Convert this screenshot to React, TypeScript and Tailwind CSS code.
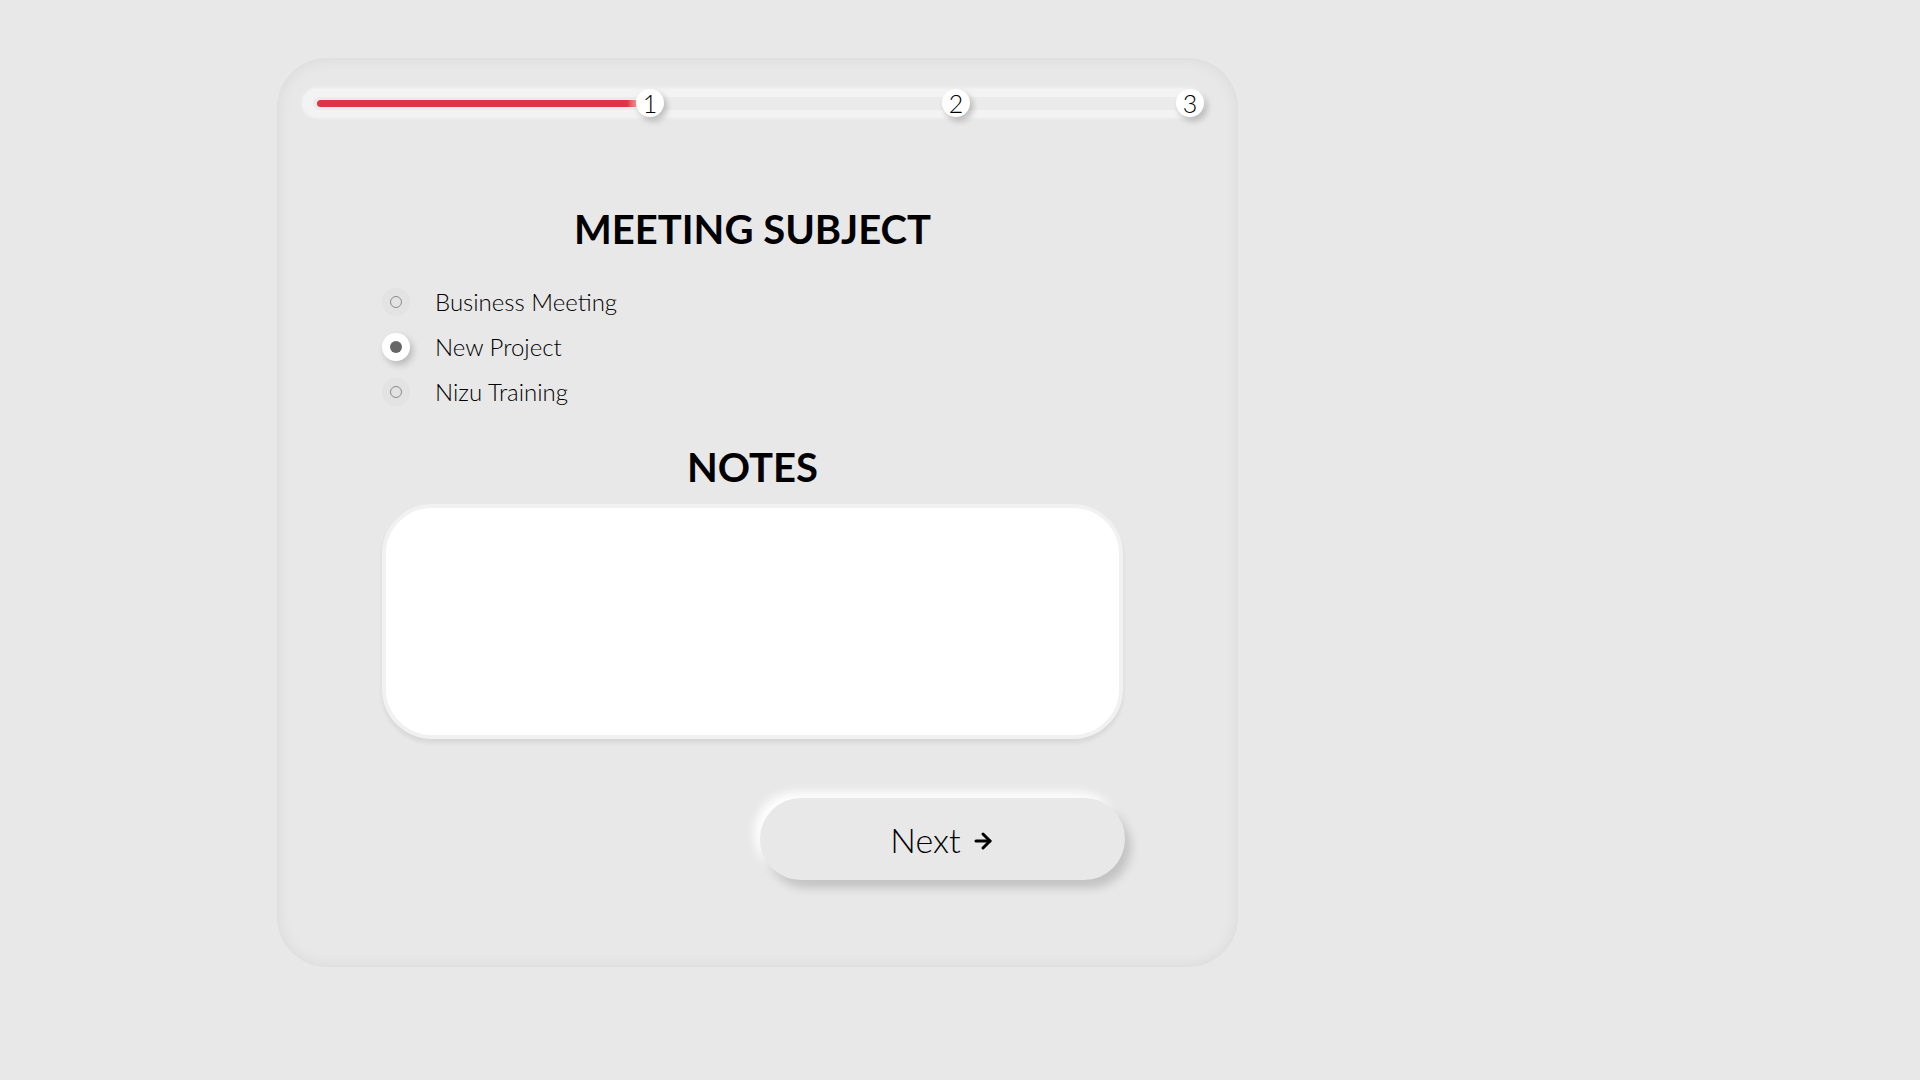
import { ArrowRight } from "lucide-react"

const subjects = [
  { label: "Business Meeting", checked: false },
  { label: "New Project", checked: true },
  { label: "Nizu Training", checked: false },
]

function Step({ n, left }: { n: number; left: string }) {
  return (
    <div
      className={`absolute top-0 ${left} w-[28px] h-[28px] rounded-full bg-white flex items-center justify-center text-[25px] leading-none font-light text-black shadow-[3px_4px_6px_rgba(0,0,0,0.22)]`}
    >
      {n}
    </div>
  )
}

export default function App() {
  return (
    <div
      className="min-h-screen bg-[#e8e8e8] pl-[277px] pt-[58px] pb-[115px]"
      style={{ fontFamily: "Lato, 'Noto Sans', sans-serif" }}
    >
      <div className="w-[961px] rounded-[50px] bg-[#e8e8e8] pt-[31px] pb-[87px] px-[26px] shadow-[inset_0_0_16px_rgba(0,0,0,0.07)]">
        {/* progress */}
        <div className="relative w-[902px] h-[28px]">
          <div className="h-[28px] rounded-full bg-[#f3f3f3] px-[10px] flex items-center shadow-[0_0_4px_rgba(255,255,255,0.9)]">
            <div className="w-full h-[13px] rounded-full bg-[#ebebeb] flex items-center px-[4px]">
              <div className="w-[330px] h-[7px] rounded-full bg-gradient-to-r from-[#dc3545] from-[94%] to-[#ebebeb]" />
            </div>
          </div>
          <Step n={1} left="left-[333px]" />
          <Step n={2} left="left-[639px]" />
          <Step n={3} left="left-[873px]" />
        </div>

        <div className="ml-[79px] w-[741px] flex flex-col">
          <h2 className="mt-[92px] text-center text-[40px] leading-none font-bold text-black">
            MEETING SUBJECT
          </h2>

          <div className="mt-[30px] flex flex-col">
            {subjects.map((s) => (
              <label key={s.label} className="h-[45px] flex items-center gap-[25px] cursor-pointer">
                {s.checked ? (
                  <span className="w-[28px] h-[28px] rounded-full bg-white flex items-center justify-center shadow-[3px_4px_7px_rgba(0,0,0,0.2)]">
                    <span className="w-[12px] h-[12px] rounded-full bg-[#666666]" />
                  </span>
                ) : (
                  <span className="w-[28px] h-[28px] rounded-full bg-[#e3e3e3] flex items-center justify-center">
                    <span className="w-[12px] h-[12px] rounded-full border border-[#8a8a8a]" />
                  </span>
                )}
                <span className="text-[24px] font-light text-black">{s.label}</span>
              </label>
            ))}
          </div>

          <h2 className="mt-[33px] text-center text-[40px] leading-none font-bold text-black">
            NOTES
          </h2>

          <textarea className="mt-[17px] h-[235px] w-full resize-none rounded-[50px] bg-white border-[4px] border-[#f1f1f1] shadow-[0_4px_4px_rgba(0,0,0,0.07)] outline-none p-6 text-[20px]" />

          <div className="mt-[59px] flex justify-end">
            <button className="w-[365px] h-[82px] -mr-[2px] rounded-full bg-[#e8e8e8] flex items-center justify-center gap-[10px] text-[34px] font-light text-black shadow-[6px_8px_10px_rgba(0,0,0,0.16),-6px_-6px_10px_rgba(255,255,255,0.95)]">
              Next
              <ArrowRight size={24} strokeWidth={3} className="mt-[3px]" />
            </button>
          </div>
        </div>
      </div>
    </div>
  )
}
